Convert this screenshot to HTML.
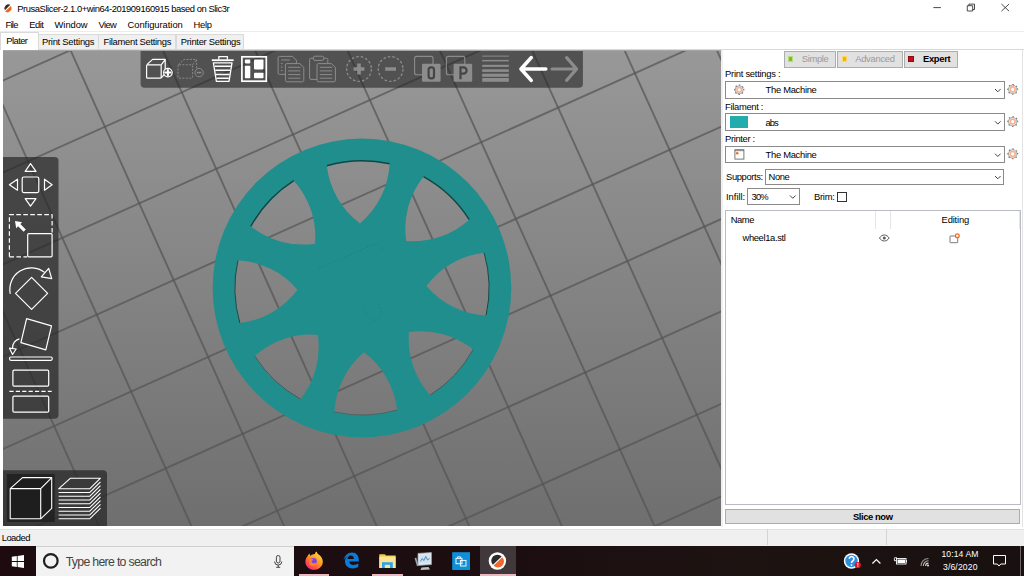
<!DOCTYPE html>
<html><head><meta charset="utf-8"><title>PrusaSlicer</title>
<style>
*{margin:0;padding:0;box-sizing:border-box}
html,body{width:1024px;height:576px;overflow:hidden;background:#fff}
body{position:relative;font-family:"Liberation Sans",sans-serif;font-size:11.5px;color:#000}
.a{position:absolute;white-space:nowrap}
.t{position:absolute;white-space:nowrap;line-height:14px;height:14px}
.tab{position:absolute;top:34px;height:15px;background:#f0f0f0;border:1px solid #d9d9d9;border-bottom:none}
.cb{position:absolute;border:1px solid #8a8a8a;background:#fff}
.btn{position:absolute;top:51px;height:17px;background:#e1e1e1;border:1px solid #adadad}
</style></head><body>

<!-- title bar -->
<svg class="a" style="left:0;top:0" width="16" height="16" viewBox="0 0 16 16"><path d="M4.900 10.200A4.100 4.100 0 0 1 10.300 4.700Z" fill="#2d2d2d"/><path d="M5 11.600L10.900 5.900A4.200 4.200 0 0 1 5 11.600Z" fill="#ee6a1c"/></svg>
<div class="t" style="left:17.3px;top:4.2px;font-size:9.4px;line-height:10.81px;height:auto;font-weight:400;color:#000;letter-spacing:-0.44px">PrusaSlicer-2.1.0+win64-201909160915 based on Slic3r</div>
<svg class="a" style="left:920px;top:0" width="104" height="20" viewBox="920 0 104 20"><g stroke="#2a2a2a" stroke-width="0.850" fill="none"><path d="M933.300 7.600h7.600"/><path d="M967.300 5.700h5.400v5.300h-5.400zM968.900 5.700v-1.600h5.600v5.400h-1.800"/><path d="M1001.400 4l7.700 7.200M1009.100 4l-7.700 7.200"/></g></svg>

<!-- menu -->
<div class="t" style="left:5.6px;top:19.7px;font-size:9.4px;line-height:10.81px;height:auto;font-weight:400;color:#000;letter-spacing:-0.77px">File</div>
<div class="t" style="left:29.2px;top:19.7px;font-size:9.4px;line-height:10.81px;height:auto;font-weight:400;color:#000;letter-spacing:-0.49px">Edit</div>
<div class="t" style="left:54.6px;top:19.7px;font-size:9.4px;line-height:10.81px;height:auto;font-weight:400;color:#000;letter-spacing:-0.07px">Window</div>
<div class="t" style="left:98.5px;top:19.7px;font-size:9.4px;line-height:10.81px;height:auto;font-weight:400;color:#000;letter-spacing:-0.62px">View</div>
<div class="t" style="left:127.5px;top:19.7px;font-size:9.4px;line-height:10.81px;height:auto;font-weight:400;color:#000;letter-spacing:-0.04px">Configuration</div>
<div class="t" style="left:193.5px;top:19.7px;font-size:9.4px;line-height:10.81px;height:auto;font-weight:400;color:#000;letter-spacing:-0.26px">Help</div>
<div class="a" style="left:0;top:31px;width:1024px;height:1px;background:#ececec"></div>

<!-- tabs -->
<div class="a" style="left:0;top:49px;width:1024px;height:1px;background:#d9d9d9"></div>
<div class="tab" style="left:0;top:32px;width:39px;height:18px;background:#fff"></div>
<div class="tab" style="left:38px;width:61px"></div>
<div class="tab" style="left:98px;width:78px"></div>
<div class="tab" style="left:176px;width:68px"></div>
<div class="t" style="left:6.3px;top:35.7px;font-size:9.4px;line-height:10.81px;height:auto;font-weight:400;color:#000;letter-spacing:-0.56px">Plater</div>
<div class="t" style="left:41.9px;top:36.5px;font-size:9.4px;line-height:10.81px;height:auto;font-weight:400;color:#000;letter-spacing:-0.24px">Print Settings</div>
<div class="t" style="left:103.6px;top:36.5px;font-size:9.4px;line-height:10.81px;height:auto;font-weight:400;color:#000;letter-spacing:-0.29px">Filament Settings</div>
<div class="t" style="left:180.8px;top:36.5px;font-size:9.4px;line-height:10.81px;height:auto;font-weight:400;color:#000;letter-spacing:-0.28px">Printer Settings</div>

<!-- viewport -->
<svg class="a" style="left:3px;top:50px" width="718" height="476" viewBox="0 0 718 476">
<defs><linearGradient id="bg" x1="0" y1="0" x2="0" y2="1"><stop offset="0" stop-color="#989898"/><stop offset="1" stop-color="#6f6f6f"/></linearGradient></defs>
<rect width="718" height="476" fill="url(#bg)"/>
<g stroke="#555" stroke-width="1.9" stroke-opacity="0.72"><line x1="-785.4" y1="-259.4" x2="-33.2" y2="1436.8"/><line x1="-708.6" y1="-293.7" x2="44.4" y2="1401.8"/><line x1="-631.9" y1="-327.9" x2="122.0" y2="1366.8"/><line x1="-555.2" y1="-362.2" x2="199.5" y2="1331.9"/><line x1="-478.5" y1="-396.5" x2="277.0" y2="1296.9"/><line x1="-401.8" y1="-430.7" x2="354.4" y2="1262.0"/><line x1="-325.1" y1="-464.9" x2="431.9" y2="1227.1"/><line x1="-248.5" y1="-499.2" x2="509.3" y2="1192.2"/><line x1="-171.9" y1="-533.4" x2="586.7" y2="1157.3"/><line x1="-95.3" y1="-567.6" x2="664.1" y2="1122.4"/><line x1="-18.8" y1="-601.8" x2="741.4" y2="1087.5"/><line x1="57.7" y1="-635.9" x2="818.7" y2="1052.7"/><line x1="134.2" y1="-670.1" x2="896.0" y2="1017.8"/><line x1="210.7" y1="-704.3" x2="973.3" y2="983.0"/><line x1="287.2" y1="-738.4" x2="1050.5" y2="948.1"/><line x1="363.6" y1="-772.5" x2="1127.7" y2="913.3"/><line x1="440.0" y1="-806.7" x2="1204.9" y2="878.5"/><line x1="516.4" y1="-840.8" x2="1282.0" y2="843.7"/><line x1="592.7" y1="-874.9" x2="1359.2" y2="808.9"/><line x1="669.0" y1="-909.0" x2="1436.3" y2="774.2"/><line x1="745.3" y1="-943.0" x2="1513.4" y2="739.4"/><line x1="821.6" y1="-977.1" x2="1590.4" y2="704.6"/><line x1="-785.4" y1="-259.4" x2="897.9" y2="-1011.2"/><line x1="-751.6" y1="-183.2" x2="932.5" y2="-935.6"/><line x1="-717.8" y1="-106.8" x2="967.1" y2="-860.0"/><line x1="-683.9" y1="-30.4" x2="1001.8" y2="-784.3"/><line x1="-650.0" y1="46.0" x2="1036.5" y2="-708.5"/><line x1="-616.0" y1="122.6" x2="1071.2" y2="-632.6"/><line x1="-582.0" y1="199.2" x2="1106.0" y2="-556.6"/><line x1="-548.0" y1="275.9" x2="1140.8" y2="-480.6"/><line x1="-513.9" y1="352.8" x2="1175.6" y2="-404.5"/><line x1="-479.8" y1="429.6" x2="1210.5" y2="-328.3"/><line x1="-445.7" y1="506.6" x2="1245.4" y2="-252.0"/><line x1="-411.5" y1="583.7" x2="1280.4" y2="-175.6"/><line x1="-377.3" y1="660.8" x2="1315.4" y2="-99.1"/><line x1="-343.1" y1="738.0" x2="1350.4" y2="-22.6"/><line x1="-308.8" y1="815.3" x2="1385.5" y2="54.0"/><line x1="-274.5" y1="892.7" x2="1420.6" y2="130.7"/><line x1="-240.1" y1="970.2" x2="1455.8" y2="207.5"/><line x1="-205.7" y1="1047.7" x2="1491.0" y2="284.3"/><line x1="-171.3" y1="1125.4" x2="1526.2" y2="361.3"/><line x1="-136.8" y1="1203.1" x2="1561.4" y2="438.3"/><line x1="-102.3" y1="1280.9" x2="1596.7" y2="515.4"/><line x1="-67.7" y1="1358.8" x2="1632.1" y2="592.6"/></g>
<path d="M508.30 237.90 A149.3 149.3 0 1 0 209.70 237.90 A149.3 149.3 0 1 0 508.30 237.90 ZM323.78 115.47 A127.4 127.4 0 0 1 386.68 113.54 A84 84 0 0 1 357.03 173.43 A84 84 0 0 1 323.78 115.47 ZM247.52 176.23 A127.4 127.4 0 0 1 290.64 130.39 A84 84 0 0 1 312.02 193.71 A84 84 0 0 1 247.52 176.23 ZM236.57 273.12 A127.4 127.4 0 0 1 234.64 210.22 A84 84 0 0 1 294.53 239.87 A84 84 0 0 1 236.57 273.12 ZM297.33 349.38 A127.4 127.4 0 0 1 251.49 306.26 A84 84 0 0 1 314.81 284.88 A84 84 0 0 1 297.33 349.38 ZM394.22 360.33 A127.4 127.4 0 0 1 331.32 362.26 A84 84 0 0 1 360.97 302.37 A84 84 0 0 1 394.22 360.33 ZM470.48 299.57 A127.4 127.4 0 0 1 427.36 345.41 A84 84 0 0 1 405.98 282.09 A84 84 0 0 1 470.48 299.57 ZM481.43 202.68 A127.4 127.4 0 0 1 483.36 265.58 A84 84 0 0 1 423.47 235.93 A84 84 0 0 1 481.43 202.68 ZM420.67 126.42 A127.4 127.4 0 0 1 466.51 169.54 A84 84 0 0 1 403.19 190.92 A84 84 0 0 1 420.67 126.42 Z" fill="#208e8c" fill-rule="evenodd"/>
<path d="M315.700 218.500L373 193.500Q378.500 194 379.300 200.800M375 250.800L378.200 263.300Q377 270.600 370 270.600L359.500 259.200" fill="none" stroke="#1a807e" stroke-width="0.800" stroke-dasharray="1.500 2"/>
<g fill="none" stroke="#0c4646"><path d="M323.86 115.75 A127.4 127.4 0 0 1 386.62 113.84" stroke-width="1.50"/><path d="M247.78 176.38 A127.4 127.4 0 0 1 290.80 130.65" stroke-width="1.33"/><path d="M236.85 273.04 A127.4 127.4 0 0 1 234.94 210.28" stroke-width="0.93"/><path d="M297.48 349.12 A127.4 127.4 0 0 1 251.75 306.10" stroke-width="0.55"/><path d="M394.14 360.05 A127.4 127.4 0 0 1 331.38 361.96" stroke-width="0.40"/><path d="M470.22 299.42 A127.4 127.4 0 0 1 427.20 345.15" stroke-width="0.57"/><path d="M481.15 202.76 A127.4 127.4 0 0 1 483.06 265.52" stroke-width="0.97"/><path d="M420.52 126.68 A127.4 127.4 0 0 1 466.25 169.70" stroke-width="1.35"/></g>
<g transform="translate(-3,-50)">
<path d="M140.6 50H582.900V83.800a4 4 0 0 1-4 4H144.600a4 4 0 0 1-4-4Z" fill="#262626" fill-opacity="0.610"/>
<!-- add -->
<g fill="none" stroke="#fff" stroke-width="1.2" stroke-linejoin="round">
<rect x="146.6" y="64.8" width="14.6" height="13.4" rx="1"/>
<path d="M146.9 64.6L152.6 59.4H165.2V73.6L161.2 77.8M161.2 64.8L165.2 59.6"/>
<circle cx="167.9" cy="72.6" r="4.3" fill="#525252"/>
</g>
<path d="M165.3 72.6h5.2M167.9 70v5.2" stroke="#fff" stroke-width="2" stroke-linecap="round"/>
<!-- delete (dimmed) -->
<g fill="none" stroke="#8c8c8c" stroke-width="1" stroke-dasharray="2 1.4" stroke-linejoin="round">
<rect x="178" y="64.8" width="14.6" height="13.4" rx="1"/>
<path d="M178.3 64.6L184 59.4H196.6V69M192.6 64.8L196.6 59.6"/>
</g>
<circle cx="199.1" cy="72.6" r="4.2" fill="#525252" stroke="#8c8c8c" stroke-width="1"/>
<path d="M196.9 72.6h4.4" stroke="#8c8c8c" stroke-width="1.6"/>
<!-- trash -->
<g fill="none" stroke="#fff" stroke-linejoin="round">
<path d="M218.8 59.6V56.6H227.4V59.6" stroke-width="1.3"/>
<path d="M211.8 60.2H233.6" stroke-width="1.8"/>
<path d="M213.4 62.8H232L229 81.4H216.4Z" stroke-width="1.3"/>
<path d="M214.6 66.2H230.8M215.3 70.3H230.1M216 74.5H229.4M216.6 78.2H228.8" stroke-width="1.5"/>
</g>
<!-- arrange -->
<rect x="241.9" y="56.8" width="24.4" height="24.4" fill="none" stroke="#fff" stroke-width="1.7"/>
<g fill="#fff"><rect x="244.9" y="59.6" width="5.4" height="3.8" rx="0.8"/><rect x="244.9" y="65.7" width="5.4" height="12.5" rx="0.8"/><rect x="254" y="59.6" width="9.5" height="9.8" rx="0.8"/><rect x="254" y="72.8" width="9.5" height="5.4" rx="0.8"/></g>
<!-- copy (dimmed) -->
<g fill="#525252" stroke="#8c8c8c" stroke-width="1" stroke-linejoin="round">
<path d="M279.5 56.4H292.6L296.4 60.2V74.4H279.5a1.4 1.4 0 0 1-1.4-1.4V57.8a1.4 1.4 0 0 1 1.4-1.4Z"/>
<path d="M281.4 60H289.8M280.8 63.6h1.8M280.8 67h1.8M280.8 70.6h1.8" fill="none"/>
<path d="M286.8 63.6H299.8L303.8 67.4V80.4a1.4 1.4 0 0 1-1.4 1.4H286.8a1.4 1.4 0 0 1-1.4-1.4V65a1.4 1.4 0 0 1 1.4-1.4Z"/>
<path d="M288.2 67.3H300.4M288.2 70.9H300.4M288.2 74.6H300.4M288.2 78.2H300.4" fill="none"/>
<!-- paste (dimmed) -->
<path d="M311 58.2H326.4a1.4 1.4 0 0 1 1.4 1.4V78a1.4 1.4 0 0 1-1.4 1.4H311a1.4 1.4 0 0 1-1.4-1.4V59.600a1.4 1.4 0 0 1 1.4-1.4Z"/>
<rect x="313.4" y="56.2" width="10.4" height="4.2" rx="1.6"/>
<path d="M318.4 63.6H331.400L335.400 67.4V80.4a1.4 1.4 0 0 1-1.4 1.4H318.4a1.4 1.4 0 0 1-1.4-1.4V65a1.4 1.4 0 0 1 1.4-1.4Z"/>
<path d="M319.800 67.3H332.200M319.800 70.9H332.200M319.800 74.6H332.200M319.800 78.200H332.200" fill="none"/>
</g>
<!-- plus/minus -->
<g fill="none" stroke="#8c8c8c">
<circle cx="359" cy="69" r="12.4" stroke-width="1.3" stroke-dasharray="2.6 2"/>
<circle cx="390.600" cy="69" r="12.4" stroke-width="1.3" stroke-dasharray="2.6 2"/>
<path d="M353.6 69H364.400M359 63.6V74.4M385.200 69H396" stroke-width="3.6"/>
</g>
<!-- split objects / parts -->
<g fill="none" stroke="#8c8c8c" stroke-width="1.1">
<rect x="414.600" y="56.4" width="18.4" height="18.4" rx="2"/><rect x="446.400" y="56.4" width="18.4" height="18.4" rx="2"/>
</g>
<rect x="422" y="63.8" width="18.6" height="18" rx="1.2" fill="#8c8c8c"/><rect x="453.600" y="63.8" width="18.600" height="18" rx="1.2" fill="#8c8c8c"/>
<rect x="428.600" y="67.4" width="5.4" height="11" rx="2.400" fill="none" stroke="#454545" stroke-width="2.200"/>
<path d="M460.500 79.200V67.400H463.500a3 3 0 0 1 0 6.200H460.500" fill="none" stroke="#454545" stroke-width="2.200"/>
<!-- layers -->
<g fill="#8c8c8c"><rect x="482.200" y="55.6" width="26.600" height="1"/><rect x="482.200" y="59.9" width="26.600" height="1.5"/><rect x="482.200" y="64.8" width="26.600" height="2.100"/><rect x="482.200" y="69.300" width="26.600" height="2.600"/><rect x="482.200" y="73.700" width="26.600" height="3.100"/><rect x="482.200" y="78" width="26.600" height="3.800"/></g>
<!-- undo/redo -->
<path d="M545.800 69H521.600M531.200 57.600L521 69L531.200 80.400" fill="none" stroke="#fff" stroke-width="3.6" stroke-linecap="round" stroke-linejoin="round"/>
<path d="M552 69H576M566.600 57.600L576.600 69L566.600 80.400" fill="none" stroke="#8c8c8c" stroke-width="3.2" stroke-linecap="round" stroke-linejoin="round"/>
</g>

<g transform="translate(-3,-50)">
<path d="M3 157H54.500a4 4 0 0 1 4 4V414.700a4 4 0 0 1-4 4H3Z" fill="#262626" fill-opacity="0.690"/>
<g fill="none" stroke="#fff" stroke-width="1.2" stroke-linejoin="round">
<!-- move -->
<rect x="22.200" y="177" width="16.600" height="15.600" rx="1.5"/>
<path d="M30.500 163.600L36 171.400H25.200ZM30.500 206.200L36 198.700H25.200ZM9.400 184.700L17.500 179.200V190.200ZM52.100 184.700L44.500 179.200V190.200Z"/>
<!-- scale -->
<path d="M9.400 256.800V214.700H52.100V233" stroke-dasharray="4.600 2.400"/>
<path d="M9.400 256.800H27" stroke-dasharray="4.600 2.400"/>
<rect x="27.700" y="233.700" width="24.400" height="23.100" rx="1"/>
<!-- rotate -->
<path d="M31.600 277.300L47.600 293.400L31.600 309.400L15.500 293.400Z"/>
<path d="M10.300 293.800A21.500 21.500 0 0 1 44.600 272.400"/>
<path d="M41.300 276.800L51.700 278.600L48.700 268.300Z"/>
<!-- place on face -->
<path d="M26.600 318.700L51.500 325.800L45.800 349.800L20.900 342.700Z"/>
<rect x="9.600" y="357" width="42.600" height="3.300" rx="1.200"/>
<path d="M19.400 338.800A9 9 0 0 0 12.600 348"/>
<path d="M9.500 348.200L16.200 349L12.500 354.500Z"/>
<!-- cut -->
<rect x="12.900" y="370.200" width="35.800" height="16" rx="1.200"/>
<rect x="12.900" y="396.200" width="35.800" height="16" rx="1.200"/>
<path d="M9.400 391.400H51.700" stroke-dasharray="4.200 2.200"/>
</g>
<path d="M15 221L22.200 222.200L20.300 224.100L25.800 229.600L23.600 231.800L18.100 226.300L16.200 228.200Z" fill="#fff"/>
</g>

<g transform="translate(-3,-50)">
<path d="M3 470.300H103a4 4 0 0 1 4 4V526H3Z" fill="#262626" fill-opacity="0.72"/>
<rect x="6.900" y="474" width="47.800" height="48" fill="#1c1c1c" fill-opacity="0.75"/>
<g fill="#1e1e1e" stroke="#fff" stroke-width="1.100" stroke-linejoin="round"><path d="M10.200 488.600L22.500 477.600H51.700V508.400L40.700 518.800H10.200Z"/><path d="M10.200 488.600H40.700V518.800M40.700 488.600L51.700 477.600" fill="none"/></g>
<g fill="none" stroke="#fff" stroke-width="1.100" stroke-linejoin="round"><path d="M58.600 488.800L70.500 478.200H100.500L89.600 488.800Z" fill="#3a3a3a"/><path d="M58.600 492.55H89.600L100.500 481.95"/><path d="M58.600 496.30H89.600L100.500 485.70"/><path d="M58.600 500.05H89.600L100.500 489.45"/><path d="M58.600 503.80H89.600L100.500 493.20"/><path d="M58.600 507.55H89.600L100.500 496.95"/><path d="M58.600 511.30H89.600L100.500 500.70"/><path d="M58.600 515.05H89.600L100.500 504.45"/><path d="M58.600 518.80H89.600L100.500 508.20"/></g>
</g>

</svg>

<div class="a" style="left:3px;top:50px;width:718px;height:1px;background:#a6a6a6"></div>
<!-- right panel -->
<div class="btn" style="left:784px;width:52px"></div><div class="btn" style="left:837px;width:66px"></div><div class="btn" style="left:904px;width:54px"></div>
<div class="a" style="left:788px;top:56px;width:5px;height:6px;background:#7fba2c;border:1px solid #b5dd7d"></div>
<div class="a" style="left:842px;top:56px;width:5px;height:6px;background:#f5b400;border:1px solid #fbd768"></div>
<div class="a" style="left:908px;top:56px;width:6px;height:6px;background:#c0111b;border:1px solid #8e0a12"></div>
<div class="t" style="left:801.7px;top:54.4px;font-size:9.4px;line-height:10.81px;height:auto;font-weight:400;color:#9a9a9a;letter-spacing:-0.31px">Simple</div>
<div class="t" style="left:855.2px;top:54.4px;font-size:9.4px;line-height:10.81px;height:auto;font-weight:400;color:#9a9a9a;letter-spacing:-0.27px">Advanced</div>
<div class="t" style="left:923.0px;top:54.4px;font-size:9.4px;line-height:10.81px;height:auto;font-weight:700;color:#000;letter-spacing:-0.32px">Expert</div>
<div class="t" style="left:725.0px;top:69.1px;font-size:9.4px;line-height:10.81px;height:auto;font-weight:400;color:#000;letter-spacing:-0.25px">Print settings :</div>
<div class="cb" style="left:725px;top:81.2px;width:279.500px;height:17.500px"></div>
<div class="t" style="left:765.6px;top:84.9px;font-size:9.4px;line-height:10.81px;height:auto;font-weight:400;color:#000;letter-spacing:-0.30px">The Machine</div>
<div class="t" style="left:725.0px;top:101.6px;font-size:9.4px;line-height:10.81px;height:auto;font-weight:400;color:#000;letter-spacing:-0.30px">Filament :</div>
<div class="cb" style="left:725px;top:113.200px;width:279.500px;height:17.400px"></div>
<div class="a" style="left:730px;top:116px;width:18px;height:12px;background:#23acac"></div>
<div class="t" style="left:765.6px;top:117.5px;font-size:9.4px;line-height:10.81px;height:auto;font-weight:400;color:#000;letter-spacing:-1.06px">abs</div>
<div class="t" style="left:725.0px;top:134.1px;font-size:9.4px;line-height:10.81px;height:auto;font-weight:400;color:#000;letter-spacing:-0.35px">Printer :</div>
<div class="cb" style="left:725px;top:145.700px;width:279.500px;height:17.200px"></div>
<div class="t" style="left:765.6px;top:149.7px;font-size:9.4px;line-height:10.81px;height:auto;font-weight:400;color:#000;letter-spacing:-0.30px">The Machine</div>
<div class="t" style="left:726.0px;top:172.3px;font-size:9.4px;line-height:10.81px;height:auto;font-weight:400;color:#000;letter-spacing:-0.37px">Supports:</div>
<div class="cb" style="left:765.400px;top:168.800px;width:239.100px;height:16.400px"></div>
<div class="t" style="left:768.6px;top:172.3px;font-size:9.4px;line-height:10.81px;height:auto;font-weight:400;color:#000;letter-spacing:-0.44px">None</div>
<div class="t" style="left:726.0px;top:191.5px;font-size:9.4px;line-height:10.81px;height:auto;font-weight:400;color:#000;letter-spacing:-0.01px">Infill:</div>
<div class="cb" style="left:747px;top:188px;width:53px;height:17px"></div>
<div class="t" style="left:751.5px;top:191.5px;font-size:9.4px;line-height:10.81px;height:auto;font-weight:400;color:#000;letter-spacing:-0.83px">30%</div>
<div class="t" style="left:814.0px;top:191.5px;font-size:9.4px;line-height:10.81px;height:auto;font-weight:400;color:#000;letter-spacing:-0.27px">Brim:</div>
<div class="a" style="left:837px;top:192px;width:10px;height:10px;border:1px solid #333;background:#fff"></div>
<svg class="a" style="left:722px;top:50px" width="302" height="160" viewBox="722 50 302 160">
<g fill="none" stroke="#3a3a3a" stroke-width="0.950"><path d="M995 89l2.800 2.800l2.800-2.800M995 121.300l2.800 2.800l2.800-2.800M995 153.700l2.800 2.800l2.800-2.800M995 176l2.800 2.800l2.800-2.800M790 195.500l2.800 2.800l2.800-2.800"/></g>
<circle cx="1012.7" cy="89.4" r="4.2" fill="none" stroke="#8a9096" stroke-width="0.8"/><circle cx="1012.7" cy="89.4" r="4.9" fill="none" stroke="#767c82" stroke-width="1.100" stroke-dasharray="1.500 2.34845" transform="rotate(-11 1012.7 89.4)"/><circle cx="1012.7" cy="89.4" r="2.45" fill="none" stroke="#f8b48c" stroke-width="1.7"/><circle cx="1012.7" cy="121.6" r="4.2" fill="none" stroke="#8a9096" stroke-width="0.8"/><circle cx="1012.7" cy="121.6" r="4.9" fill="none" stroke="#767c82" stroke-width="1.100" stroke-dasharray="1.500 2.34845" transform="rotate(-11 1012.7 121.6)"/><circle cx="1012.7" cy="121.6" r="2.45" fill="none" stroke="#f8b48c" stroke-width="1.7"/><circle cx="1012.7" cy="153.9" r="4.2" fill="none" stroke="#8a9096" stroke-width="0.8"/><circle cx="1012.7" cy="153.9" r="4.9" fill="none" stroke="#767c82" stroke-width="1.100" stroke-dasharray="1.500 2.34845" transform="rotate(-11 1012.7 153.9)"/><circle cx="1012.7" cy="153.9" r="2.45" fill="none" stroke="#f8b48c" stroke-width="1.7"/><circle cx="739.2" cy="89.8" r="3.99" fill="none" stroke="#8a9096" stroke-width="0.8"/><circle cx="739.2" cy="89.8" r="4.655" fill="none" stroke="#767c82" stroke-width="1.100" stroke-dasharray="1.500 2.15603" transform="rotate(-11 739.2 89.8)"/><circle cx="739.2" cy="89.8" r="2.3275" fill="none" stroke="#f8b48c" stroke-width="1.615"/><rect x="734.900" y="149.700" width="9" height="9.400" fill="#fff" stroke="#6a6a6a" stroke-width="0.900"/><path d="M734.900 150.700h9" stroke="#6a6a6a" stroke-width="0.800"/><circle cx="737.200" cy="153.200" r="1.300" fill="#f26b21"/>
</svg>
<div class="a" style="left:725px;top:210px;width:296px;height:295px;border:1px solid #b9bcc4;background:#fff"></div>
<div class="a" style="left:875px;top:211px;width:1px;height:18px;background:#e5e5e5"></div>
<div class="a" style="left:890px;top:211px;width:1px;height:18px;background:#e5e5e5"></div>
<div class="a" style="left:1019px;top:211px;width:1px;height:18px;background:#e5e5e5"></div>
<svg class="a" style="left:870px;top:228px" width="100" height="20" viewBox="870 228 100 20">
<path d="M879.500 238c2.400-4 7.200-4 9.600 0c-2.400 4-7.200 4-9.600 0z" fill="none" stroke="#5a5a5a" stroke-width="1"/><circle cx="884.300" cy="238" r="1.500" fill="#5a5a5a"/>
<path d="M954.800 236h-4.300a0.500 0.500 0 0 0-0.500 0.500v5.700a0.500 0.500 0 0 0 0.500 0.500h6.700a0.500 0.500 0 0 0 0.500-0.500v-4" fill="none" stroke="#6a6a6a" stroke-width="0.900"/>
<circle cx="957.300" cy="235.700" r="1.900" fill="#fff" stroke="#f26b21" stroke-width="1.300"/>
</svg>
<div class="a" style="left:1022px;top:50px;width:1px;height:477px;background:#e3e3e3"></div>
<div class="t" style="left:730.7px;top:215.3px;font-size:9.4px;line-height:10.81px;height:auto;font-weight:400;color:#000;letter-spacing:-0.41px">Name</div>
<div class="t" style="left:941.6px;top:215.3px;font-size:9.4px;line-height:10.81px;height:auto;font-weight:400;color:#000;letter-spacing:-0.18px">Editing</div>
<div class="t" style="left:742.5px;top:233.4px;font-size:9.4px;line-height:10.81px;height:auto;font-weight:400;color:#000;letter-spacing:-0.36px">wheel1a.stl</div>
<div class="a" style="left:725px;top:509px;width:295px;height:15px;background:#e1e1e1;border:1px solid #adadad"></div>
<div class="t" style="left:853.0px;top:512.4px;font-size:9.4px;line-height:10.81px;height:auto;font-weight:700;color:#000;letter-spacing:-0.41px">Slice now</div>

<!-- status bar -->
<div class="a" style="left:0;top:529px;width:1024px;height:17px;background:#f0f0f0;border-top:1px solid #e2e2e2"></div>
<div class="a" style="left:721px;top:50px;width:2px;height:477px;background:#f0f0f0"></div>
<div class="t" style="left:1.7px;top:533.4px;font-size:9.4px;line-height:10.81px;height:auto;font-weight:400;color:#000;letter-spacing:-0.50px">Loaded</div>
<div class="a" style="left:767px;top:529px;width:1px;height:16px;background:#d4d4d4"></div>
<div class="a" style="left:886px;top:529px;width:1px;height:16px;background:#d4d4d4"></div>

<!-- taskbar -->
<div class="a" style="left:0;top:546px;width:1024px;height:30px;background:linear-gradient(90deg,#1d0b10 0%,#1c0e10 50%,#1d1311 72%,#181110 100%)"></div>
<div class="a" style="left:36px;top:546px;width:258px;height:30px;background:#f2f2f2;border-top:1px solid #cfcfcf"></div>
<div class="a" style="left:480px;top:546px;width:36px;height:30px;background:#41383b"></div>
<div class="a" style="left:299px;top:574px;width:30px;height:2px;background:#eeb4c0"></div>
<div class="a" style="left:372px;top:574px;width:31px;height:2px;background:#eeb4c0"></div>
<div class="a" style="left:480px;top:574px;width:36px;height:2px;background:#eeb4c0"></div>
<div class="t" style="left:65.7px;top:555.1px;font-size:12.3px;line-height:14.145px;height:auto;font-weight:400;color:#444;letter-spacing:-0.69px">Type here to search</div>
<div class="t" style="left:941.5px;top:550.1px;font-size:8.6px;line-height:9.89px;height:auto;font-weight:400;color:#fff;letter-spacing:0.08px">10:14 AM</div>
<div class="t" style="left:943.0px;top:563.3px;font-size:8.6px;line-height:9.89px;height:auto;font-weight:400;color:#fff;letter-spacing:0.14px">3/6/2020</div>
<svg class="a" style="left:0;top:546px" width="1024" height="30" viewBox="0 546 1024 30">
<!-- start -->
<path d="M11.800 556.700l5.000-0.700v5.100h-5.000zM17.600 555.900l6.400-0.900v6.100h-6.400zM11.800 561.900h5.000v5.100l-5.000-0.700zM17.600 561.900h6.400v6.100l-6.400-0.900z" fill="#fff"/>
<circle cx="50.800" cy="560.900" r="6.800" fill="none" stroke="#1e1e1e" stroke-width="2.200"/>
<g fill="none" stroke="#444" stroke-width="1"><rect x="276.400" y="555.500" width="3.600" height="7.500" rx="1.800"/><path d="M274.600 561.500a3.600 3.600 0 0 0 7.200 0M278.200 565.100v2M276.200 567.300h4"/></g>
<!-- firefox -->
<defs><linearGradient id="ff" x1="0.85" y1="0.05" x2="0.2" y2="0.95"><stop offset="0" stop-color="#ffe14a"/><stop offset="0.45" stop-color="#ff9a1f"/><stop offset="0.8" stop-color="#ff4a4a"/><stop offset="1" stop-color="#f5308a"/></linearGradient></defs>
<path d="M307.500 556.300c0.600-1.500 1.600-2.500 2.300-2.800c-0.200 1 0.100 1.800 0.700 2.300c1.200-1.300 3-2 4.600-1.900c-0.200-0.800 0.500-1.800 1.500-2.300c0.300 1.600 1.300 2.400 2.700 3.500c2 1.600 3.500 3.900 3.500 6.600c0 4.600-3.900 8.100-8.700 8.100c-4.800 0-8.700-3.500-8.700-8.100c0-2 0.700-3.900 2.100-5.400z" fill="url(#ff)"/>
<circle cx="313.500" cy="561.300" r="3.300" fill="#7a3ff0"/><path d="M309.800 559.500c1.500-0.700 3-0.400 4 0.500c-1.800 0-2.300 1-2 2c0.500 1.500 3 2 4.800 0.300c-0.200 2.800-2.600 4-4.800 3.500c-2.600-0.600-3.500-3.800-2-6.300z" fill="#ff8a1f" opacity="0.900"/>
<!-- edge -->
<path d="M343.600 560.200c0.800-4.600 4.200-7.800 8.400-7.800c4.400 0 6.800 3.300 6.800 7.400v1.700h-9.700c0.200 2.300 2 3.500 4.300 3.500c1.900 0 3.500-0.500 4.900-1.400v3.500c-1.600 0.900-3.500 1.300-5.700 1.300c-4.400 0-7.300-2.700-7.600-6.400c-0.300-3.500 2-6 5-7c-1.600 1.200-2.400 2.700-2.500 3.900h6.400c0-2-1.100-3.300-3.200-3.300c-2.700 0-5.800 1.700-7.100 4.600z" fill="#0a7bd6"/>
<!-- explorer -->
<path d="M379.300 554.200h5.400l1.300 1.300h9.600v12.500h-16.300z" fill="#f5c84c"/><path d="M379.300 556.600h16.300v11.400h-16.300z" fill="#fbe594"/><path d="M382 562.200h10.800v5.800h-10.800z" fill="#31a2e8"/><path d="M384.800 564.800h5.200v3.200h-5.200z" fill="#fbe594"/>
<!-- monitor -->
<path d="M418 553.400l13.400-0.800v12l-13.400 0.800z" fill="#e8ecef" stroke="#9aa4ab" stroke-width="0.800"/><path d="M419.600 555l10.400-0.600v8.600l-10.400 0.600z" fill="#cfe3f1"/><path d="M420.300 561.500l2-3l1.500 2l2-4l1.700 3.500l2-1.500" stroke="#2f6fb0" stroke-width="0.800" fill="none"/><path d="M421.500 567.500l7-0.400l1.500 2.300l-9.500 0.600z" fill="#b9c0c5"/><path d="M416.200 557.500l2.400 8.200l-1.600 0.500l-2.400-8z" fill="#9aa4ab"/>
<!-- store-like -->
<rect x="452.200" y="552.200" width="17.800" height="17.800" fill="#0e8fd8"/><g fill="none" stroke="#fff" stroke-width="0.900"><rect x="456" y="558.300" width="6" height="5.400"/><rect x="460.400" y="560.400" width="5.600" height="5.600"/><path d="M457.500 558.300v-1.400h3v1.400"/></g>
<!-- prusaslicer -->
<circle cx="497.400" cy="561" r="8.700" fill="#fff"/><path d="M492.900 564.800a6 6 0 0 1 8.800-8.200z" fill="#2b2b2b"/><path d="M493.600 565.500l8.800-8.200a6 6 0 0 1-8.800 8.200z" fill="#f2682a"/>
<!-- tray -->
<circle cx="851.500" cy="561" r="7.700" fill="#fff"/><circle cx="851.500" cy="561" r="6.200" fill="#2f8fdd"/>
<path d="M849.300 558.800a2.300 2.300 0 1 1 3.500 2c-0.900 0.600-1.300 1-1.300 2.200" fill="none" stroke="#fff" stroke-width="1.600"/><circle cx="851.500" cy="565.100" r="0.950" fill="#fff"/>
<circle cx="857.800" cy="565" r="3.100" fill="#e81123"/><rect x="857.400" y="563" width="0.900" height="2.600" fill="#fff"/><rect x="857.400" y="566.200" width="0.900" height="0.900" fill="#fff"/>
<path d="M872.400 563.500l4-4l4 4" fill="none" stroke="#fff" stroke-width="1.200"/>
<g fill="none" stroke="#fff" stroke-width="0.900"><rect x="896.500" y="558.500" width="9.500" height="5.500"/><path d="M906.400 560v2.500"/><path d="M894.400 558.200v2.500h2M895 557v1.200M896.200 557v1.200"/></g><rect x="897.500" y="559.500" width="7.500" height="3.500" fill="#fff"/>
<g fill="none" stroke-width="1.100"><path d="M921 566a7.500 7.500 0 0 1 7.500-7.500" stroke="#fff" opacity="0.550"/><path d="M923.300 566a5.200 5.200 0 0 1 5.200-5.200" stroke="#fff" opacity="0.700"/><path d="M925.600 566a2.900 2.900 0 0 1 2.900-2.900" stroke="#fff" opacity="0.850"/></g><circle cx="928" cy="565.500" r="0.900" fill="#fff"/>
<path d="M993.500 555.500h12v8.500h-4.700l-1.800 2l-1.800-2h-3.700z" fill="none" stroke="#fff" stroke-width="1"/>
<rect x="1020" y="546" width="1" height="30" fill="#6c6567"/>
</svg>

</body></html>
